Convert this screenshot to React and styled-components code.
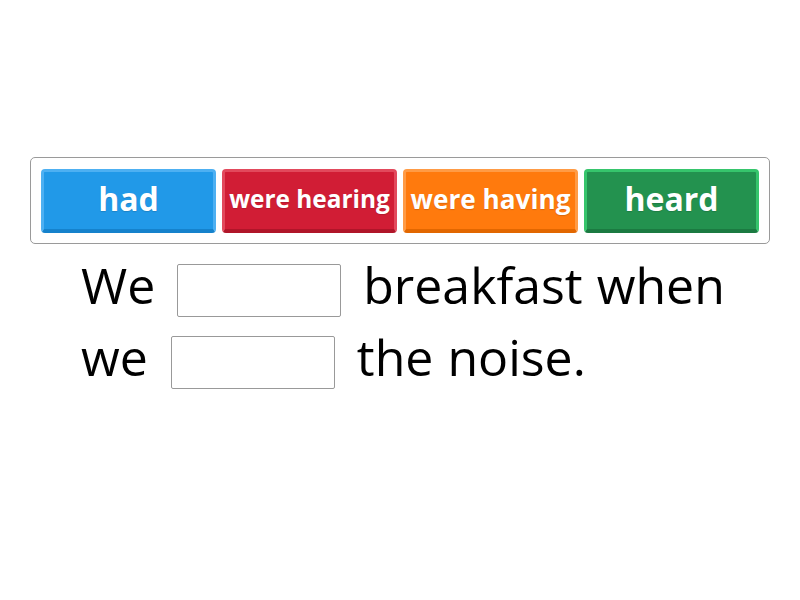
import React from 'react';
import styled, { createGlobalStyle } from 'styled-components';

const GlobalStyle = createGlobalStyle`
  html, body {
    margin: 0;
    padding: 0;
    background: #ffffff;
  }
  body {
    font-family: "Open Sans", "Liberation Sans", sans-serif;
  }
`;

const tileColors = {
  blue: { face: '#2199e8', edge: '#4db0f2', bottom: '#1582cc' },
  red: { face: '#d11d35', edge: '#e2495c', bottom: '#b01529' },
  orange: { face: '#ff7a0d', edge: '#ff9b45', bottom: '#e26700' },
  green: { face: '#23924f', edge: '#36c56c', bottom: '#1b7a41' },
};

const Page = styled.div`
  width: 800px;
  height: 600px;
  padding-top: 157px;
  box-sizing: border-box;
`;

const Bank = styled.div`
  margin: 0 30px;
  height: 87px;
  box-sizing: border-box;
  border: 1px solid #9a9a9a;
  border-radius: 5px;
  display: flex;
  align-items: center;
  gap: 6px;
  padding: 0 10px;
`;

const Tile = styled.div`
  width: 175px;
  height: 64px;
  box-sizing: border-box;
  border-radius: 4px;
  background: ${p => tileColors[p.color].face};
  border: 3px solid ${p => tileColors[p.color].edge};
  border-bottom: 4px solid ${p => tileColors[p.color].bottom};
  padding-bottom: 3px;
  display: flex;
  align-items: center;
  justify-content: center;
  color: #ffffff;
  font-weight: 700;
  font-size: ${p => p.size}px;
  white-space: nowrap;
  overflow: hidden;
  text-shadow: 0 1px 1px rgba(0, 0, 0, 0.15);
`;

const Sentence = styled.div`
  margin: 19px 0 0 81px;
  display: flex;
  flex-direction: column;
  gap: 18px;
  font-size: 50px;
  color: #000000;
`;

const Line = styled.div`
  display: flex;
  align-items: center;
  height: 54px;
  white-space: nowrap;
`;

const Word = styled.span`
  margin-right: 14px;
  line-height: 42px;
  padding-bottom: 10px;
`;

const Blank = styled.div`
  width: 164px;
  height: 53px;
  margin: 0 22px 0 ${p => p.lead}px;
  box-sizing: border-box;
  border: 1px solid #999999;
  border-radius: 2px;
  background: #ffffff;
`;

export default function App() {
  return (
    <Page>
      <GlobalStyle />
      <Bank>
        <Tile color="blue" size={32}>had</Tile>
        <Tile color="red" size={24.4}>were hearing</Tile>
        <Tile color="orange" size={26.2}>were having</Tile>
        <Tile color="green" size={32}>heard</Tile>
      </Bank>
      <Sentence>
        <Line>
          <Word>We</Word>
          <Blank lead={8} />
          <Word>breakfast</Word>
          <Word>when</Word>
        </Line>
        <Line>
          <Word>we</Word>
          <Blank lead={9} />
          <Word>the</Word>
          <Word>noise.</Word>
        </Line>
      </Sentence>
    </Page>
  );
}
